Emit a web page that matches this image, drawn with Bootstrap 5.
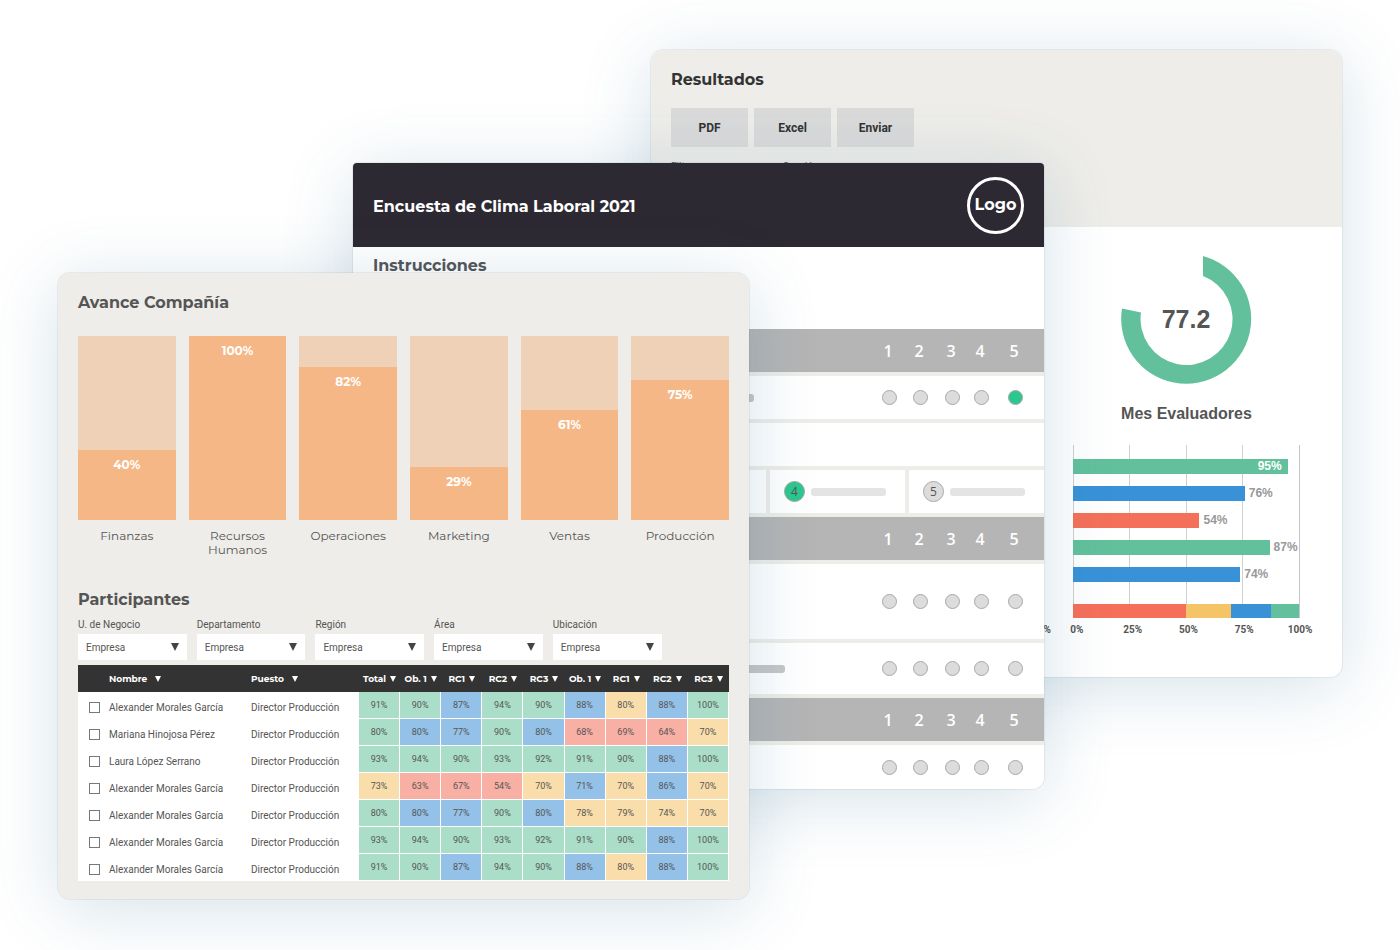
<!DOCTYPE html>
<html lang="es">
<head>
<meta charset="utf-8">
<meta name="viewport" content="width=device-width, initial-scale=1">
<title>Encuesta de Clima Laboral</title>
<link href="https://cdn.jsdelivr.net/npm/bootstrap@5.3.0/dist/css/bootstrap.min.css" rel="stylesheet">
<style>
:root{--display:"Montserrat","Inter",sans-serif;--beige:#eeede9;--ink:#555}
body{font-family:"Roboto",sans-serif;font-size:10px;color:var(--ink);background:#fff}
/* Three windows share one grid row and overlap by column span */
.stage{display:grid;grid-template-columns:minmax(0,58fr) minmax(0,295fr) minmax(0,298fr) minmax(0,98fr) minmax(0,295fr) minmax(0,298fr) minmax(0,58fr);align-items:start}
.pane{grid-row:1;border-radius:12px;overflow:hidden;box-shadow:0 0 0 1px rgba(60,80,90,.08),0 10px 70px rgba(30,100,140,.19)}
.pane-results{grid-column:4 / 7;margin-top:50px;background:#fff}
.pane-survey{grid-column:3 / 6;margin-top:163px;background:#fff;border-radius:4px 4px 12px 12px}
.pane-company{grid-column:2 / 5;margin-top:273px;background:var(--beige);padding:20px 20px 18px}
.h-title{font-family:var(--display);font-size:16px;line-height:20px;font-weight:700;margin:0}
/* results */
.results-top{background:var(--beige);height:177px;padding:20px}
.results-top .h-title{color:#333}
.tools{gap:6px;margin-top:18px}
.btn-tool{width:77px;height:39px;background:#dadada;border:0;border-radius:0;font-size:12px;font-weight:700;color:#333;padding:0}
.btn-tool:hover{background:#ccc}
.captions{margin-top:14px;line-height:12px}
.captions span{width:112px}
.results-body{padding:26px 42px 41px 0}
.gauge{width:132px;height:132px;display:block}
.gauge text{font:700 25px "Liberation Sans",sans-serif;fill:var(--ink)}
.arial-h{font:700 16px/20px "Liberation Sans",sans-serif;margin:19px 0 21px}
.chart-col{width:35%}
.plot{height:173px;padding-top:14px;background-image:repeating-linear-gradient(90deg,#d0d0d0 0 1px,transparent 1px 25%);border-right:1px solid #c4c4c4}
.hbar{height:15px;margin-bottom:12px;color:#999;font:700 12px/15px "Liberation Sans",sans-serif;gap:4px}
.hbar-fill{height:15px;text-align:right;color:#fff;padding-right:6px}
.c-green{background:#62c19c}.c-blue{background:#3992d8}.c-red{background:#f57059}.c-yellow{background:#f5c467}
.stack{height:14px;margin-top:22px}
.axis{font-weight:700;line-height:12px;margin:6px -13px 0 -9px}
.axis span{width:26px;text-align:center}
.axis-end{font-weight:700;line-height:12px;padding-right:22px}
/* survey */
.survey-head{background:#2d2933;height:84px;padding:0 20px}
.survey-head h1{padding-top:4px}
.ring{width:57px;height:57px;border:3px solid #fff;border-radius:50%}
.intro{height:82px;padding:9px 20px}
.matrix{background:var(--beige);gap:4px}
.matrix-row{display:grid;grid-template-columns:1fr 30px 32px 32px 26px 42px;padding-right:8px;align-items:center;justify-items:center;background:#fff;height:43px}
.matrix-band{background:#b5b5b5;color:#fff;font:600 16px/20px "Open Sans",sans-serif;padding-right:9px}
.row-xl{height:75px}.row-lg{height:51px}.row-end{height:44px}
.ghost{height:8px;border-radius:3px;background:#c6c6c6;justify-self:start}
.dot{appearance:none;width:15px;height:15px;border:1px solid #a8a8a8;border-radius:50%;background:#dcdcdc;margin:0}
.dot:checked{background:#2cc78f}
.dot-lg{width:21px;height:21px;grid-area:1/1}
.options{display:grid;grid-template-columns:repeat(5,1fr);gap:4px}
.option{background:#fff;height:43px;padding-left:14px;gap:6px}
.option-mark{display:grid;place-items:center}
.option-mark span{grid-area:1/1;font:400 12px/12px "Open Sans",sans-serif;pointer-events:none}
.option .ghost{width:75px;background:#e4e4e4}
/* company */
.vbars{display:grid;grid-template-columns:repeat(6,1fr);gap:13px;margin-top:23px;min-height:222px}
.vtrack{height:184px;background:#efd1b8}
.vfill{background:#f6b787;color:#fff;font:700 12px/14px var(--display);padding-top:8px}
.vname{font:400 12px/14px var(--display);margin-top:9px}
.people-title{margin-top:32px}
.filters{gap:10px;margin-top:9px}
.filter-item{width:16.7%}
.filter-item label{line-height:12px;margin-bottom:3px}
.filter-item select{height:26px;border:0;border-radius:0;font-size:10px;color:var(--ink);padding:0 20px 0 8px;background:#fff url("data:image/svg+xml,%3Csvg xmlns='http://www.w3.org/2000/svg' viewBox='0 0 8 8'%3E%3Cpath d='M0 0h8L4 8z' fill='%23444'/%3E%3C/svg%3E") no-repeat right 8px center/8px 8px}
.people{table-layout:fixed;width:100%;background:#fff;border-collapse:separate;border-spacing:0;margin-top:5px}
.people th{height:27px;background:#333;color:#fff;font:700 9px/12px var(--display);padding:0;white-space:nowrap}
.people th i{display:inline-block;border:3px solid transparent;border-top:6px solid #fff;border-bottom:0;margin-left:4px}
.people th.wide i{margin-left:8px}
.people td{height:27px;padding:0;line-height:12px;white-space:nowrap}
.people td.who{padding-top:4px}
.people td.score{font-size:9px;text-align:center;border:1px solid #fff;border-width:0 1px 1px 0}
.people input{appearance:none;width:11px;height:11px;border:1px solid #777;background:#fff;margin:0 0 0 11px;display:block}
.people input:checked{background:#62c19c}
.col-check{width:31px}.col-name{width:142px}.col-job{width:108px}
.g{background:#aadec9}.b{background:#94c1e8}.y{background:#f9deac}.r{background:#f8afa4}
</style>
</head>
<body>
<main class="stage min-vh-100 pb-5">

  <section class="pane pane-results" aria-label="Resultados">
    <div class="results-top">
      <h2 class="h-title">Resultados</h2>
      <div class="tools d-flex">
        <button type="button" class="btn btn-tool">PDF</button>
        <button type="button" class="btn btn-tool">Excel</button>
        <button type="button" class="btn btn-tool">Enviar</button>
      </div>
      <div class="captions d-flex"><span>Filtro</span><span>Sección</span></div>
    </div>
    <div class="results-body d-flex justify-content-end align-items-end">
      <div class="axis-end">100%</div>
      <div class="chart-col">
        <svg class="gauge mx-auto" viewBox="0 0 132 132" role="img" aria-label="77.2">
          <path d="M83 3A65 65 0 1 1 2 55.500L21 59.500A46 46 0 1 0 83 23Z" fill="#62c19c"/>
          <text x="66" y="75" text-anchor="middle">77.2</text>
        </svg>
        <h3 class="arial-h text-center">Mes Evaluadores</h3>
        <div class="plot">
          <div id="hbars"></div>
          <div class="stack d-flex">
            <div class="c-red" style="width:50%"></div>
            <div class="c-yellow" style="width:20%"></div>
            <div class="c-blue" style="width:17.5%"></div>
            <div class="c-green" style="width:12.5%"></div>
          </div>
        </div>
        <div class="axis d-flex justify-content-between">
          <span>0%</span><span>25%</span><span>50%</span><span>75%</span><span>100%</span>
        </div>
      </div>
    </div>
  </section>

  <section class="pane pane-survey" aria-label="Encuesta">
    <header class="survey-head d-flex align-items-center justify-content-between">
      <h1 class="h-title text-white">Encuesta de Clima Laboral 2021</h1>
      <div class="ring h-title text-white d-flex align-items-center justify-content-center">Logo</div>
    </header>
    <div class="intro"><h2 class="h-title">Instrucciones</h2></div>
    <div class="matrix d-flex flex-column" id="matrix"></div>
  </section>

  <section class="pane pane-company" aria-label="Avance">
    <h2 class="h-title">Avance Compañía</h2>
    <div class="vbars text-center" id="vbars"></div>
    <h2 class="h-title people-title">Participantes</h2>
    <div class="filters d-flex" id="filters"></div>
    <table class="people">
      <colgroup><col class="col-check"><col class="col-name"><col class="col-job"><col span="9"></colgroup>
      <thead>
        <tr>
          <th></th><th class="wide">Nombre<i></i></th><th class="wide">Puesto<i></i></th>
          <th class="text-center">Total<i></i></th><th class="text-center">Ob. 1<i></i></th><th class="text-center">RC1<i></i></th><th class="text-center">RC2<i></i></th><th class="text-center">RC3<i></i></th><th class="text-center">Ob. 1<i></i></th><th class="text-center">RC1<i></i></th><th class="text-center">RC2<i></i></th><th class="text-center">RC3<i></i></th>
        </tr>
      </thead>
      <tbody id="people"></tbody>
    </table>
  </section>

</main>
<script src="https://cdn.jsdelivr.net/npm/bootstrap@5.3.0/dist/js/bootstrap.bundle.min.js"></script>
<script>
const $ = id => document.getElementById(id);

/* value, colour, drawn length in % of the scale */
$('hbars').innerHTML = [[95,'green',95],[76,'blue',76],[54,'red',56],[87,'green',87],[74,'blue',74]].map(([v,c,w]) =>
  `<div class="hbar d-flex"><div class="hbar-fill c-${c}" style="width:${w}%">${v > 90 ? v + '%' : ''}</div>${v > 90 ? '' : v + '%'}</div>`).join('');

/* name, value, drawn height in % of the track */
$('vbars').innerHTML = [['Finanzas',40,38],['Recursos Humanos',100,100],['Operaciones',82,83],['Marketing',29,29],['Ventas',61,60],['Producción',75,76]].map(([n,v,h]) =>
  `<div><div class="vtrack d-flex flex-column justify-content-end"><div class="vfill" style="height:${h}%">${v}%</div></div><div class="vname">${n}</div></div>`).join('');

$('filters').innerHTML = ['U. de Negocio','Departamento','Región','Área','Ubicación'].map((n,i) =>
  `<div class="filter-item"><label class="d-block" for="f${i}">${n}</label><select class="form-select" id="f${i}"><option>Empresa</option></select></div>`).join('');

/* Survey blocks: band of headings, radio rows, option cards */
const band = '<div class="matrix-row matrix-band"><span></span>' + [1,2,3,4,5].map(n => `<span>${n}</span>`).join('') + '</div>';
let q = 0;
const row = (cls, ghost, checked) => {
  q++;
  return `<div class="matrix-row ${cls}"><span class="ghost" style="width:${ghost}%"></span>` + [1,2,3,4,5].map(n =>
    `<input type="radio" class="dot" name="q${q}" aria-label="Respuesta ${n}"${n === checked ? ' checked' : ''}>`).join('') + '</div>';
};
const options = '<div class="options">' + [1,2,3,4,5].map(n =>
  `<label class="option d-flex align-items-center"><span class="option-mark"><input type="radio" class="dot dot-lg" name="opt"${n === 4 ? ' checked' : ''}><span>${n}</span></span><i class="ghost"></i></label>`).join('') + '</div>';
$('matrix').innerHTML = band + row('', 77, 5) + '<div class="matrix-row"></div>' + options + band +
  row('row-xl', 0) + row('row-lg', 83) + band + row('row-end', 0);

const scores = [
  ['Alexander Morales García','g91 g90 b87 g94 g90 b88 y80 b88 g100'],
  ['Mariana Hinojosa Pérez','g80 b80 b77 g90 b80 r68 r69 r64 y70'],
  ['Laura López Serrano','g93 g94 g90 g93 g92 g91 g90 b88 g100'],
  ['Alexander Morales García','y73 r63 r67 r54 y70 b71 y70 b86 y70'],
  ['Alexander Morales García','g80 b80 b77 g90 b80 y78 y79 y74 y70'],
  ['Alexander Morales García','g93 g94 g90 g93 g92 g91 g90 b88 g100'],
  ['Alexander Morales García','g91 g90 b87 g94 g90 b88 y80 b88 g100']
];
$('people').innerHTML = scores.map(([n,s]) =>
  `<tr><td class="who"><input type="checkbox" aria-label="${n}"></td><td class="who">${n}</td><td class="who">Director Producción</td>` +
  s.split(' ').map(v => `<td class="score ${v[0]}">${v.slice(1)}%</td>`).join('') + '</tr>').join('');
</script>
</body>
</html>
